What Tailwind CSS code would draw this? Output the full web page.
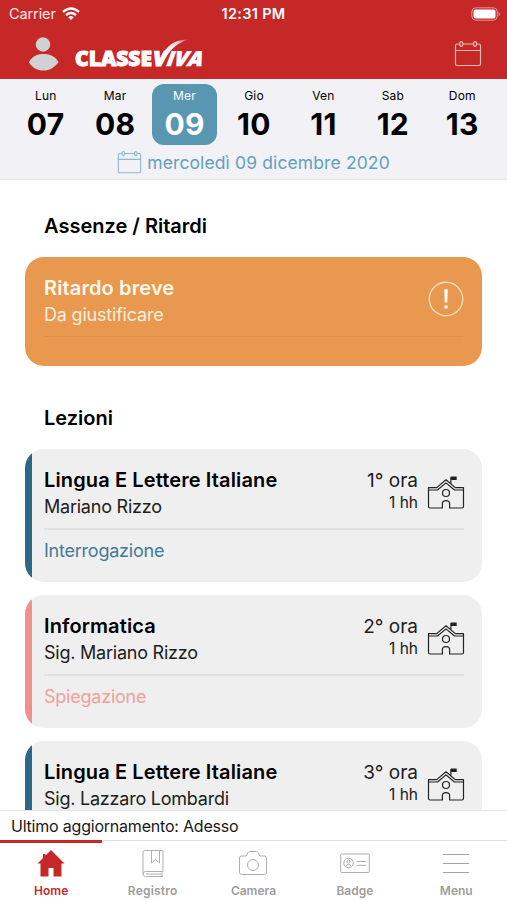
<!DOCTYPE html>
<html lang="it">
<head>
<meta charset="utf-8">
<meta name="viewport" content="width=device-width, initial-scale=1">
<title>ClasseViva</title>
<script src="https://cdn.jsdelivr.net/npm/@tailwindcss/browser@4"></script>
</head>
<body class="bg-white">
<svg width="0" height="0" class="absolute">
  <symbol id="calendar" viewBox="0 0 28 28">
    <g fill="none" stroke="currentColor" stroke-width="1.200">
      <path d="M5.600 4H3Q1.500 4 1.500 5.500V24Q1.500 25.500 3 25.500H25Q26.500 25.500 26.500 24V5.500Q26.500 4 25 4H22.600M8.800 4H19.400M1.500 10.500H26.500"/>
      <ellipse cx="7.200" cy="4" rx="1.600" ry="2.300"/><ellipse cx="21" cy="4" rx="1.600" ry="2.300"/>
    </g>
  </symbol>
  <symbol id="school" viewBox="0 0 38 36">
    <g fill="none" stroke="currentColor" stroke-width="1.200" stroke-linejoin="round">
      <path d="M1.500 12.600H9.700L19 4.800L28.300 12.600H36.500V31.500Q36.500 33 35 33H22.600V28.500Q22.600 25.600 19 25.600T15.400 28.500V33H3Q1.500 33 1.500 31.500ZM1.500 15H10.500L19 7.900L27.500 15H36.500"/>
      <circle cx="19" cy="18" r="3.500"/>
      <path d="M23.900 8.500V2"/>
    </g>
    <path d="M23.900 1.500H29.700V5H23.900Z" fill="currentColor"/>
  </symbol>
</svg>
<div class="w-[507px] h-[900px] flex flex-col overflow-hidden bg-white text-black font-['Inter','Liberation_Sans',sans-serif]">
  <header class="h-[79px] shrink-0 bg-[#c62828] text-white flex flex-col">
    <div class="h-[28px] grid grid-cols-3 items-center pl-[9px] pr-[6px]">
      <div class="flex items-center gap-[6px]">
        <span class="text-[14.500px] leading-[20px] tracking-[-0.100px] text-white/90">Carrier</span>
        <svg class="w-[18px] h-[14px]" viewBox="0 0 18 14" fill="none" stroke="white" stroke-width="2.400"><path d="M1 4.900Q9-2 17 4.900M4 8.200Q9 4 14 8.200"/><path d="M9 13L6.200 10.200Q9 8 11.800 10.200Z" fill="white" stroke="none"/></svg>
      </div>
      <span class="justify-self-center text-[14.500px] leading-[20px] font-semibold whitespace-nowrap tracking-[0.300px] mr-[3px]">12:31 PM</span>
      <svg class="justify-self-end w-[30px] h-[14px]" viewBox="0 0 30 14"><rect x=".8" y=".8" width="25.400" height="12.400" rx="4" fill="none" stroke="white" stroke-opacity=".5"/><rect x="2.500" y="2.500" width="22" height="9" rx="2" fill="white"/><path d="M27.500 4.500Q30 7 27.500 9.500Z" fill="white" fill-opacity=".5"/></svg>
    </div>
    <div class="h-[51px] flex items-center pl-[28px] pr-[25px]">
      <svg class="w-[31px] h-[34px]" viewBox="0 0 31 34" fill="#d0d1d2"><circle cx="15" cy="7.500" r="7.200"/><path d="M1 25.200C4 19.500 9 17.100 15.500 17.100S27.500 19.500 30.500 25.200C26 30.500 22 33.500 15.500 33.500S4 30.500 1 25.200Z"/></svg>
      <svg class="w-[150px] h-[34px] ml-[15px] overflow-visible" viewBox="0 0 150 34" fill="white">
        <defs><linearGradient id="swoosh" x1="90" y1="15" x2="116" y2="3" gradientUnits="userSpaceOnUse"><stop stop-color="white"/><stop offset=".55" stop-color="white" stop-opacity=".8"/><stop offset="1" stop-color="white" stop-opacity="0"/></linearGradient></defs>
        <g class="font-['Open_Sans','Inter',sans-serif] font-extrabold" font-size="20.500" stroke="white" stroke-width="1">
          <text x="1" y="29" textLength="77" lengthAdjust="spacingAndGlyphs">CLASSE</text>
          <g transform="translate(78.500 29) skewX(-12)"><text x="-1" y="0" textLength="14" lengthAdjust="spacingAndGlyphs">V</text></g>
          <g transform="translate(92 29) skewX(-20)" stroke-width=".6"><text x="-1" y="0" textLength="36" lengthAdjust="spacingAndGlyphs">IVA</text></g>
        </g>
        <path d="M84 26C90.500 11 98 2 116 2.500C104 5 97 11 86 29Z" fill="url(#swoosh)"/>
      </svg>
      <svg class="w-[28px] h-[28px] ml-auto text-[#f4b9b5]"><use href="#calendar"/></svg>
    </div>
  </header>

  <section class="h-[101px] shrink-0 bg-[#f1f1f6] border-b border-[#e4e4e8] pt-[5px]">
    <div class="grid grid-cols-7 pl-[11px] pr-[10px]" id="days"></div>
    <div class="h-[35px] flex items-center justify-center gap-[5px] text-[#64a0bd]">
      <svg class="w-[25px] h-[25px] text-[#8db9cd]"><use href="#calendar"/></svg>
      <span class="text-[17.500px] leading-[24px] tracking-[0.120px] whitespace-nowrap">mercoledì 09 dicembre 2020</span>
    </div>
  </section>

  <main class="flex-1 min-h-0 overflow-hidden px-[25px] pt-[32px]">
    <h2 class="pl-[19px] text-[20px] leading-[28px] font-semibold">Assenze / Ritardi</h2>
    <article class="mt-[17px] h-[109px] rounded-[19px] bg-[#e8994f] px-[19px] pt-[18px] text-white">
      <div class="flex h-[62px] justify-between border-b border-[#dc8f48]">
        <div>
          <div class="text-[20px] leading-[27px] font-semibold tracking-[0.120px] text-[#fff8ed]">Ritardo breve</div>
          <div class="text-[18px] leading-[25px] tracking-[-0.200px] text-[#ffedda]">Da giustificare</div>
        </div>
        <svg class="w-[36px] h-[36px] mt-[6px] -mr-px" viewBox="0 0 36 36"><circle cx="18" cy="18" r="16.700" fill="none" stroke="#fad9b8" stroke-width="1.400"/><path d="M16.300 8.300H19.700L19.300 21.500H16.700Z" fill="white"/><circle cx="18" cy="26" r="1.800" fill="white"/></svg>
      </div>
    </article>
    <h2 class="mt-[38px] pl-[19px] text-[20px] leading-[28px] font-semibold">Lezioni</h2>
    <div id="lessons" class="mt-[17px] flex flex-col gap-[13px]"></div>
  </main>

  <div class="h-[30px] shrink-0 border-t border-[#e5e5e5] pl-[11px] pt-px text-[16px] leading-[28px] tracking-[-0.210px] text-[#181818]">Ultimo aggiornamento: Adesso</div>
  <nav class="relative h-[60px] shrink-0 border-t border-[#dedede] grid grid-cols-5 text-[#9d9d9d] text-[12px] leading-[16px] font-semibold text-center">
    <div class="absolute left-0 -top-px w-[102px] h-[3px] bg-[#c62828]"></div>
    <div class="flex flex-col items-center pt-[7px] pl-px text-[#c62828]"><svg class="w-[30px] h-[32px] mb-[3px]" viewBox="0 0 30 32"><path d="M15 2L28.500 15.500H25.500V28.500H17.500V20H12.500V28.500H4.500V15.500H1.500L7 10V6H9.500V7.500Z" fill="currentColor"/></svg><span>Home</span></div>
    <div class="flex flex-col items-center pt-[7px] pl-px"><svg class="w-[30px] h-[32px] mb-[3px]" viewBox="0 0 30 32" fill="none" stroke="#b0b0b0"><path d="M25 23.500V3.500Q25 2.500 24 2.500H7Q5 2.500 5 4.500V26Q5 28.500 7.500 28.500H25M25 23.500H7.500Q5 23.500 5 26M24 23.500V28.500M8 26H23M13.500 2.500V15L17.500 11.500L21.500 15V2.500"/></svg><span class="tracking-[0.200px]">Registro</span></div>
    <div class="flex flex-col items-center pt-[7px]"><svg class="w-[30px] h-[32px] mb-[3px]" viewBox="0 0 30 32" fill="none" stroke="#adadad"><path d="M3.500 8H8L10 4.500Q10.500 3.500 11.500 3.500H18.500Q19.500 3.500 20 4.500L22 8H26.500Q28.500 8 28.500 10V24.500Q28.500 26.500 26.500 26.500H3.500Q1.500 26.500 1.500 24.500V10Q1.500 8 3.500 8Z"/><circle cx="15" cy="17" r="5.500"/></svg><span>Camera</span></div>
    <div class="flex flex-col items-center pt-[7px]"><svg class="w-[30px] h-[32px] mb-[3px]" viewBox="0 0 30 32" fill="none" stroke="#adadad"><rect x=".7" y="6" width="28.600" height="18.500" rx="1"/><circle cx="8.500" cy="15" r="4.700"/><circle cx="8.500" cy="13.500" r="1.500"/><path d="M5.500 18.200Q8.500 14.500 11.500 18.200M16.500 13.500H26M16.500 17.300H26"/></svg><span>Badge</span></div>
    <div class="flex flex-col items-center pt-[7px]"><svg class="w-[30px] h-[32px] mb-[3px]" viewBox="0 0 30 32" fill="none" stroke="#a5a5a5"><path d="M2 6.500H28M2 15.500H28M2 24.500H28"/></svg><span>Menu</span></div>
  </nav>
</div>
<script>
const days = [['Lun','07'],['Mar','08'],['Mer','09'],['Gio','10'],['Ven','11'],['Sab','12'],['Dom','13']];
document.getElementById('days').innerHTML = days.map(([n, d], i) =>
  `<div class="mx-auto w-[65px] h-[61px] rounded-[12px] text-center ${i === 2 ? 'bg-[#5896b1] text-white' : ''}">
    <div class="pt-[4px] text-[12px] leading-[16px] tracking-[0.200px]">${n}</div>
    <div class="text-[30px] leading-[40px] font-bold tracking-[0.300px]">${d}</div>
  </div>`).join('');

const lessons = [
  ['Lingua E Lettere Italiane', 'Mariano Rizzo', '1° ora', 'Interrogazione', 'bg-[#2d6785]', 'text-[#427c98]'],
  ['Informatica', 'Sig. Mariano Rizzo', '2° ora', 'Spiegazione', 'bg-[#f1908c]', 'text-[#f1a09c]'],
  ['Lingua E Lettere Italiane', 'Sig. Lazzaro Lombardi', '3° ora', '', 'bg-[#2d6785]', 'text-[#427c98]']
];
document.getElementById('lessons').innerHTML = lessons.map(([subject, teacher, hour, kind, bar, color]) =>
  `<article class="h-[133px] shrink-0 flex rounded-[19px] overflow-hidden bg-[#efefef]">
    <div class="w-[7px] ${bar}"></div>
    <div class="flex-1 pl-[12px] pr-[18px] pt-[18px]">
      <div class="h-[63px] flex border-b-2 border-[#e1e1e1]">
        <div class="flex-1 whitespace-nowrap">
          <div class="text-[20px] leading-[27px] font-semibold tracking-[0.120px]">${subject}</div>
          <div class="text-[18px] leading-[25px] tracking-[-0.230px] text-[#202020]">${teacher}</div>
        </div>
        <div class="text-right mr-[9px] whitespace-nowrap">
          <div class="text-[19px] leading-[27px] text-[#202020]">${hour}</div>
          <div class="text-[15.500px] leading-[18px] text-[#202020]">1 hh</div>
        </div>
        <svg class="w-[38px] h-[36px] mt-[8px] -mr-px text-[#222222]"><use href="#school"/></svg>
      </div>
      <div class="pt-[8px] text-[18px] leading-[26px] tracking-[-0.230px] ${color}">${kind}</div>
    </div>
  </article>`).join('');
</script>
</body>
</html>
